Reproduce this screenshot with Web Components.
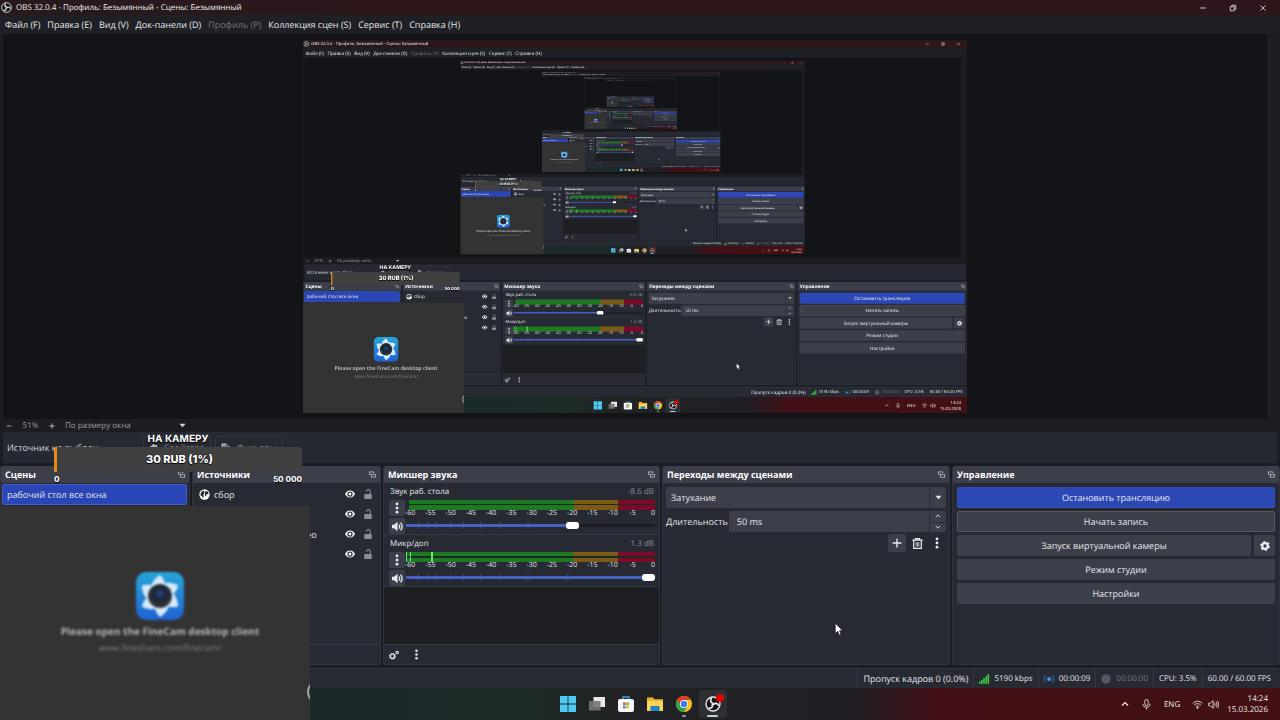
<!DOCTYPE html>
<html lang="ru">
<head>
<meta charset="utf-8">
<title>OBS 32.0.4 - Профиль: Безымянный - Сцены: Безымянный</title>
<style>
    body {
        margin: 0;
        overflow: hidden;
        background: #1d1f26;
    }
</style>
</head>
<body>
<obs-desktop depth="5"></obs-desktop>

<script>
// Icons are drawn in a 16x16 box and take the text colour
const ICONS = {
    obs: `<circle cx="8" cy="8" r="7" fill="#151518" stroke="currentColor" stroke-width="1.3"/>
        <g fill="none" stroke="currentColor" stroke-width="1.7" stroke-linecap="round">
            <path d="M8 7.2C5.6 6.6 5 4.6 6.2 2.8"/>
            <path d="M8 7.2C5.6 6.6 5 4.6 6.2 2.8" transform="rotate(120 8 8)"/>
            <path d="M8 7.2C5.6 6.6 5 4.6 6.2 2.8" transform="rotate(240 8 8)"/>
        </g>`,
    minimize: `<path d="M2 8h12" stroke="currentColor" stroke-width="1.6"/>`,
    restore: `<path d="M2.5 5.5h8v8h-8zM5.5 5V2.5h8v8H11" fill="none" stroke="currentColor" stroke-width="1.6"/>`,
    close: `<path d="M3 3l10 10M13 3L3 13" stroke="currentColor" stroke-width="1.6"/>`,
    minus: `<path d="M2 8h12" stroke="currentColor" stroke-width="2"/>`,
    plus: `<path d="M8 1v14M1 8h14" stroke="currentColor" stroke-width="2.2"/>`,
    down: `<path d="M1 4h14l-7 8z" fill="currentColor"/>`,
    chevronUp: `<path d="M2 11l6-6 6 6" fill="none" stroke="currentColor" stroke-width="2.4"/>`,
    chevronDown: `<path d="M2 5l6 6 6-6" fill="none" stroke="currentColor" stroke-width="2.4"/>`,
    float: `<path d="M11 4.500V2H1v6h3" fill="none" stroke="currentColor" stroke-width="1.8"/>
        <path d="M5.5 7.5h9.500v6.500h-9.500z" fill="none" stroke="currentColor" stroke-width="1.8"/>`,
    globe: `<circle cx="8" cy="8" r="7.5" fill="#fff"/>
        <path d="M3 5l3-3 2 1-1 2 1 1-2 2 1 2-1 3-2-3-2-1zM10 3l3 1 1 3-2 1-2-1 1 3-1 1-2-3 1-2-1-1z" fill="#20232b"/>`,
    eye: `<path d="M0 8c2-4 5-5.6 8-5.6S14 4 16 8c-2 4-5 5.6-8 5.6S2 12 0 8z" fill="#fff"/>
        <circle cx="8" cy="8" r="4.2" fill="#20232b"/><circle cx="8" cy="8" r="2.4" fill="#fff"/>`,
    lock: `<path d="M2 8h12v8H2z" fill="currentColor"/>
        <path d="M5.5 4.5V4c0-4 6-4 6 0v4" fill="none" stroke="currentColor" stroke-width="1.7"/>`,
    dots: `<circle cx="8" cy="2.5" r="1.9" fill="currentColor"/><circle cx="8" cy="8" r="1.9" fill="currentColor"/><circle cx="8" cy="13.5" r="1.9" fill="currentColor"/>`,
    speaker: `<path d="M0 5.5h3L8 1v14l-5-4.5H0z" fill="currentColor"/>
        <path d="M10 5c1.6 1.6 1.6 4.4 0 6M12.3 2.5c3.2 3 3.2 8 0 11" fill="none" stroke="currentColor" stroke-width="1.9"/>`,
    gear: `<circle cx="8" cy="8" r="4.5" fill="none" stroke="currentColor" stroke-width="3.6"/>
        <circle cx="8" cy="8" r="6.4" fill="none" stroke="currentColor" stroke-width="3" stroke-dasharray="3 3.7"/>`,
    gears: `<circle cx="5.5" cy="10" r="3.4" fill="none" stroke="currentColor" stroke-width="2.2"/>
        <circle cx="5.5" cy="10" r="5" fill="none" stroke="currentColor" stroke-width="1.4" stroke-dasharray="2 1.9"/>
        <circle cx="13" cy="4" r="2" fill="none" stroke="currentColor" stroke-width="1.8"/>`,
    filter: `<path d="M1 1h9v3H4v9H1z" fill="currentColor"/><path d="M5.5 5.5h9v9h-9z" fill="none" stroke="currentColor" stroke-width="1.6"/><path d="M8 8h4v4H8z" fill="currentColor"/>`,
    trash: `<path d="M0.5 3.2h15M5 3V1h6v2M2.5 4v11h11V4" fill="none" stroke="currentColor" stroke-width="1.8"/>
        <path d="M6 6v6.5M8 6v6.5M10 6v6.5" stroke="currentColor" stroke-width="1.1"/>`,
    bars: `<path d="M0 15.5V12h2.4v3.5zM3.4 15.5V9.5h2.4v6zM6.8 15.5V6.5h2.4v9zM10.2 15.5V3.5h2.4v12zM13.6 15.5V0H16v15.5z" fill="#3fd23f"/>`,
    live: `<circle cx="8" cy="8" r="3" fill="#4a9fee"/>
        <path d="M4 3c-2.6 3-2.6 7 0 10M12 3c2.6 3 2.6 7 0 10M1.5 2c-2.2 4-2.2 8 0 12M14.5 2c2.2 4 2.2 8 0 12" fill="none" stroke="#2a6095" stroke-width="1.4"/>`,
    record: `<circle cx="8" cy="8" r="7.5" fill="#555861"/>`,
    wifi: `<path d="M1 6.5c4-4.3 10-4.3 14 0M3.2 9c2.7-3 6.9-3 9.6 0M5.5 11.3c1.4-1.5 3.6-1.5 5 0" fill="none" stroke="currentColor" stroke-width="1.3"/>
        <circle cx="8" cy="13" r="1.3" fill="currentColor"/>`,
    volume: `<path d="M1 6h2.5L7.5 2.5v11L3.5 10H1z" fill="none" stroke="currentColor" stroke-width="1.2"/>
        <path d="M9.5 6c1 1.2 1 2.8 0 4M11.5 4c2 2.3 2 5.7 0 8M13.5 2.5c2.6 3.2 2.6 7.8 0 11" fill="none" stroke="currentColor" stroke-width="1.2"/>`,
    mic: `<rect x="5.5" y="0.7" width="5" height="9" rx="2.5" fill="none" stroke="currentColor" stroke-width="1.2"/>
        <path d="M3 7v1c0 5.5 10 5.5 10 0V7M8 12v3.5" fill="none" stroke="currentColor" stroke-width="1.2"/>`,
    windows: `<path d="M0 0h7.6v7.6H0zM8.4 0H16v7.6H8.4zM0 8.4h7.6V16H0zM8.4 8.4H16V16H8.4z" fill="#4fcaf5"/>`,
    tasks: `<path d="M4.5 1H16v10H4.5z" fill="#e8e8ea"/><path d="M0 5h11.5v9.5H0z" fill="#77777b" fill-opacity=".9"/>`,
    store: `<path d="M5 4V1h6v3" fill="none" stroke="#3ba7e0" stroke-width="1.3"/><rect y="3" width="16" height="13" rx="2" fill="#f3f5f8"/>
        <path d="M5 6.5h2.7v2.7H5z" fill="#e8502e"/><path d="M8.3 6.5H11v2.7H8.3z" fill="#7eb72d"/><path d="M5 9.8h2.7v2.7H5z" fill="#2a9fe0"/><path d="M8.3 9.8H11v2.7H8.3z" fill="#f7b91e"/>`,
    folder: `<path d="M0 1.5h6l1.5 1.8H16V15H0z" fill="#f0b429"/><path d="M0 5h16v10H0z" fill="#fbd45c"/><path d="M3.5 10h9v5h-9z" fill="#2782c4"/>`,
    chrome: `<circle cx="8" cy="8" r="8" fill="#fbc116"/><path d="M1.07 4A8 8 0 0 1 14.93 4H8L4.5 10z" fill="#e33b2e"/>
        <path d="M1.07 4A8 8 0 0 0 8 16l3.5-6L8 8l-3.5 2z" fill="#2ba24c"/><circle cx="8" cy="8" r="4.1" fill="#fff"/><circle cx="8" cy="8" r="3.2" fill="#3b7ded"/>`,
    cursor: `<path d="M4 0v13l3-2.8L9 15l2.2-1-2-4.5H13z" fill="#fff" stroke="#111" stroke-width=".8"/>`,
};

class ObsIcon extends HTMLElement {
    constructor() {
        super();
        this.attachShadow({ mode: "open" });
    }

    connectedCallback() {
        const size = this.getAttribute("size") || 10;
        this.shadowRoot.innerHTML = `
            <style>
                :host { display: inline-block; flex: none; line-height: 0; }
                svg { display: block; overflow: visible; }
            </style>
            <svg width="${size}" height="${size}" viewBox="0 0 16 16" aria-hidden="true">${ICONS[this.getAttribute("name")]}</svg>
        `;
    }
}

class ObsButton extends HTMLElement {
    constructor() {
        super();
        this.attachShadow({ mode: "open" });
    }

    connectedCallback() {
        const label = this.getAttribute("label");
        this.shadowRoot.innerHTML = `
            <style>
                :host { display: block; }
                button {
                    display: flex;
                    align-items: center;
                    justify-content: center;
                    box-sizing: border-box;
                    width: 100%;
                    height: 100%;
                    padding: 3px 4px;
                    border: 1px solid #3c404b;
                    border-radius: 2px;
                    background: #3c3f4a;
                    color: #e9eaed;
                    font: inherit;
                    line-height: 13px;
                    text-rendering: inherit;
                }
                :host([primary]) button { background: #2b48b5; border-color: #3450b8; }
                :host([outlined]) button { border-color: #555965; }
                :host([bare]) button { background: none; border-color: transparent; padding: 0; }
                :host([tight]) button { padding: 0; }
            </style>
            <button type="button" ${label ? `aria-label="${label}"` : ""}><slot></slot></button>
        `;
    }
}

class ObsMenuBar extends HTMLElement {
    constructor() {
        super();
        this.attachShadow({ mode: "open" });
        this.shadowRoot.innerHTML = `
            <style>
                :host { display: block; }
                .title {
                    display: flex;
                    align-items: center;
                    gap: 4px;
                    height: 15px;
                    padding: 0 13px 0 1px;
                    background: linear-gradient(90deg, #27191c, #2d171b 30%, #2d171b);
                    color: #eee;
                    font-size: 8px;
                }
                .title span { flex: 1; }
                .window { display: flex; gap: 22px; }
                nav {
                    display: flex;
                    gap: 7px;
                    padding: 3px 5px 3px;
                    background: #1e2025;
                    font-size: 9px;
                    line-height: 13px;
                }
                a { color: #e8e8ea; text-decoration: none; }
                a.off { color: #73757b; }
            </style>
            <div class="title">
                <obs-icon name="obs" size="11"></obs-icon>
                <span>OBS 32.0.4 - Профиль: Безымянный - Сцены: Безымянный</span>
                <div class="window">
                    <obs-icon name="minimize" size="8"></obs-icon>
                    <obs-icon name="restore" size="8"></obs-icon>
                    <obs-icon name="close" size="8"></obs-icon>
                </div>
            </div>
            <nav>
                <a href="#">Файл (F)</a><a href="#">Правка (E)</a><a href="#">Вид (V)</a>
                <a href="#">Док-панели (D)</a><a href="#" class="off">Профиль (P)</a>
                <a href="#">Коллекция сцен (S)</a><a href="#">Сервис (T)</a><a href="#">Справка (H)</a>
            </nav>
        `;
    }
}

class ObsPreview extends HTMLElement {
    constructor() {
        super();
        this.attachShadow({ mode: "open" });
        this.shadowRoot.innerHTML = `
            <style>
                :host { display: flex; flex-direction: column; min-height: 0; background: #1b1d21; }
                .area {
                    flex: 1;
                    display: flex;
                    align-items: center;
                    justify-content: center;
                    min-height: 0;
                    margin: 0 13px 0 3px;
                    background: #131418;
                }
                /* the captured screen, shown at the zoom of the preview */
                .capture {
                    --scale: 0.519;
                    width: calc(100vw * var(--scale));
                    height: calc(100vh * var(--scale));
                    overflow: hidden;
                }
                ::slotted(*) {
                    transform: scale(0.519);
                    transform-origin: 0 0;
                }
                .zoom {
                    display: flex;
                    align-items: center;
                    padding: 0 6px;
                    color: #9b9da3;
                    font-size: 8px;
                    line-height: 13px;
                }
                .zoom obs-icon { color: #d0d1d5; }
                .zoom output { width: 37px; text-align: center; }
                .zoom span { width: 114px; margin-left: 10px; }
            </style>
            <div class="area"><div class="capture"><slot></slot></div></div>
            <div class="zoom">
                <obs-icon name="minus" size="6"></obs-icon>
                <output>51%</output>
                <obs-icon name="plus" size="6"></obs-icon>
                <span>По размеру окна</span>
                <obs-icon name="down" size="7"></obs-icon>
            </div>
        `;
    }
}

class ObsContextBar extends HTMLElement {
    constructor() {
        super();
        this.attachShadow({ mode: "open" });
        this.shadowRoot.innerHTML = `
            <style>
                :host {
                    display: flex;
                    align-items: center;
                    gap: 4px;
                    margin: 0 3px;
                    padding: 4px;
                    background: #262932;
                    border-radius: 2px;
                    color: #d7d8dc;
                }
                span { width: 132px; }
                button {
                    display: flex;
                    align-items: center;
                    justify-content: center;
                    gap: 6px;
                    width: 68px;
                    height: 23px;
                    padding: 0;
                    border: 1px solid #323641;
                    border-radius: 2px;
                    background: none;
                    color: #85878e;
                    font: inherit;
                    text-rendering: inherit;
                }
                obs-icon { color: #b8babf; }
            </style>
            <span>Источник не выбран</span>
            <button type="button" disabled><obs-icon name="gear" size="8"></obs-icon>Свойства</button>
            <button type="button" disabled><obs-icon name="filter" size="9"></obs-icon>Фильтры</button>
        `;
    }
}

class ObsDock extends HTMLElement {
    constructor() {
        super();
        this.attachShadow({ mode: "open" });
    }

    connectedCallback() {
        this.shadowRoot.innerHTML = `
            <style>
                :host {
                    display: flex;
                    flex-direction: column;
                    min-width: 0;
                    border: 1px solid #30333d;
                    border-top: 0;
                    border-radius: 3px;
                    background: #272a33;
                    overflow: hidden;
                }
                header {
                    display: flex;
                    align-items: center;
                    justify-content: space-between;
                    padding: 2px 4px;
                    background: #3c3e4a;
                }
                h2 {
                    margin: 0;
                    color: #fff;
                    font-size: 9px;
                    font-weight: 700;
                    line-height: 13px;
                }
                obs-icon { color: #c6c8ce; }
            </style>
            <header><h2>${this.getAttribute("heading")}</h2><obs-icon name="float" size="7"></obs-icon></header>
            <slot></slot>
        `;
    }
}

class ObsSource extends HTMLElement {
    constructor() {
        super();
        this.attachShadow({ mode: "open" });
    }

    connectedCallback() {
        const icon = this.getAttribute("icon");
        this.shadowRoot.innerHTML = `
            <style>
                :host {
                    display: grid;
                    grid-template-columns: 11px 1fr 14px 14px;
                    align-items: center;
                    gap: 4px;
                    height: 20px;
                    padding: 0 5px 0 6px;
                }
                span { white-space: nowrap; }
                .lock { color: #8d8f95; }
            </style>
            ${icon ? `<obs-icon name="${icon}" size="11"></obs-icon>` : "<i></i>"}
            <span><slot></slot></span>
            <obs-button bare label="Видимость"><obs-icon name="eye" size="10"></obs-icon></obs-button>
            <obs-button bare label="Блокировка"><obs-icon class="lock" name="lock" size="10"></obs-icon></obs-button>
        `;
    }
}

class ObsChannel extends HTMLElement {
    constructor() {
        super();
        this.attachShadow({ mode: "open" });
    }

    connectedCallback() {
        const name = this.getAttribute("name");
        const value = this.getAttribute("value");
        const marks = [];
        for (let db = -60; db <= 0; db += 5) marks.push(`<span>${db}</span>`);
        // volume ticks follow a logarithmic scale
        const ticks = [5, 9, 12, 18, 23, 30, 38, 49, 65]
            .map((x) => `<path d="M${x * 10} 0v10"/>`).join("");

        this.shadowRoot.innerHTML = `
            <style>
                :host {
                    display: grid;
                    grid-template-columns: 16px 1fr;
                    column-gap: 1px;
                    padding: 2px 4px 0 5px;
                    border-bottom: 1px solid #343843;
                }
                .head {
                    grid-column: 1 / 3;
                    display: flex;
                    justify-content: space-between;
                    padding: 0 1px 2px;
                    font-size: 8px;
                    line-height: 13px;
                }
                output { color: #8b8d94; }
                .side { display: grid; grid-template-rows: 16px 16px; gap: 2px; }
                .meter {
                    height: 10px;
                    margin-left: 3px;
                    background:
                        linear-gradient(transparent 45%, #1b2b22 45%, #1b2b22 55%, transparent 55%),
                        linear-gradient(90deg, #1e7a22 67%, #7a5a15 67%, #7a5a15 85%, #7c0a28 85%);
                }
                :host([live]) .meter {
                    margin-left: 0;
                    background:
                        linear-gradient(#62e86a, #62e86a) 0 0 / 1px 10px no-repeat,
                        linear-gradient(#62e86a, #62e86a) 4px 0 / 1px 10px no-repeat,
                        linear-gradient(#62e86a, #62e86a) 25px 0 / 2px 10px no-repeat,
                        linear-gradient(transparent 45%, #1b2b22 45%, #1b2b22 55%, transparent 55%),
                        linear-gradient(90deg, #1e7a22 67%, #7a5a15 67%, #7a5a15 85%, #7c0a28 85%);
                }
                .scale {
                    display: flex;
                    justify-content: space-between;
                    margin-right: -2px;
                    color: #e0e1e4;
                    font-size: 7px;
                    line-height: 8px;
                }
                .scale span { display: flex; justify-content: center; width: 8px; }
                .fader { display: grid; align-items: center; height: 14px; }
                .fader > * { grid-area: 1 / 1; }
                svg { width: 100%; height: 8px; stroke: #4c5060; stroke-width: 3; }
                input {
                    appearance: none;
                    width: 100%;
                    height: 3px;
                    margin: 0;
                    background: linear-gradient(90deg, #4460c4 ${value}%, #1b1d23 ${value}%);
                }
                input::-webkit-slider-thumb {
                    appearance: none;
                    width: 13px;
                    height: 7px;
                    border-radius: 3px;
                    background: #fff;
                }
            </style>
            <div class="head"><label for="volume">${name}</label><output>${this.getAttribute("db")} dB</output></div>
            <div class="side">
                <obs-button tight label="Меню: ${name}"><obs-icon name="dots" size="12"></obs-icon></obs-button>
                <obs-button tight label="Заглушить: ${name}"><obs-icon name="speaker" size="11"></obs-icon></obs-button>
            </div>
            <div>
                <div class="meter"></div>
                <div class="scale">${marks.join("")}</div>
                <div class="fader">
                    <svg viewBox="0 0 1000 10" preserveAspectRatio="none">${ticks}</svg>
                    <input id="volume" type="range" min="0" max="100" value="${value}">
                </div>
            </div>
        `;
    }
}

class ObsTransitions extends HTMLElement {
    constructor() {
        super();
        this.attachShadow({ mode: "open" });
        this.shadowRoot.innerHTML = `
            <style>
                :host { display: flex; flex-direction: column; gap: 3px; padding: 4px 3px; }
                .field {
                    flex: 1;
                    display: grid;
                    grid-template-columns: 1fr 16px;
                    height: 21px;
                    border-radius: 2px;
                    background: #3c3f4a;
                }
                .pick { flex: none; }
                select, input {
                    appearance: none;
                    min-width: 0;
                    margin: 0;
                    padding: 0 5px;
                    border: 0;
                    border-right: 1px solid #2b2e38;
                    background: none;
                    color: #e9eaed;
                    font: inherit;
                    text-rendering: inherit;
                }
                input { padding-left: 8px; }
                .pick obs-icon { place-self: center; }
                .row { display: flex; align-items: center; gap: 1px; }
                .steps { display: grid; grid-template-rows: 1fr 1fr; color: #c9cbd0; }
                .steps obs-button + obs-button { border-top: 1px solid #2b2e38; }
                .tools { display: flex; justify-content: flex-end; gap: 2px; margin-top: -1px; }
                .tools obs-button { width: 18px; height: 18px; }
            </style>
            <div class="field pick">
                <select aria-label="Переход"><option>Затухание</option></select>
                <obs-icon name="down" size="7"></obs-icon>
            </div>
            <div class="row">
                <label for="duration">Длительность</label>
                <div class="field">
                    <input id="duration" type="text" value="50 ms">
                    <div class="steps">
                        <obs-button bare label="Больше"><obs-icon name="chevronUp" size="6"></obs-icon></obs-button>
                        <obs-button bare label="Меньше"><obs-icon name="chevronDown" size="6"></obs-icon></obs-button>
                    </div>
                </div>
            </div>
            <div class="tools">
                <obs-button tight label="Добавить"><obs-icon name="plus" size="10"></obs-icon></obs-button>
                <obs-button bare label="Удалить"><obs-icon name="trash" size="11"></obs-icon></obs-button>
                <obs-button bare label="Ещё"><obs-icon name="dots" size="12"></obs-icon></obs-button>
            </div>
        `;
    }
}

class ObsStatusBar extends HTMLElement {
    constructor() {
        super();
        this.attachShadow({ mode: "open" });
        this.shadowRoot.innerHTML = `
            <style>
                :host {
                    display: flex;
                    justify-content: flex-end;
                    margin-top: 3px;
                    padding-right: 4px;
                    border-top: 1px solid #333640;
                    background: #272a33;
                    font-size: 8px;
                    line-height: 19px;
                }
                span {
                    display: flex;
                    align-items: center;
                    gap: 5px;
                    padding: 0 5px;
                    border-left: 1px solid #343741;
                }
                .frames { font-size: 9px; }
                .off { color: #777981; }
            </style>
            <span class="frames">Пропуск кадров 0 (0.0%)</span>
            <span><obs-icon name="bars" size="10"></obs-icon>5190 kbps</span>
            <span><obs-icon name="live" size="10"></obs-icon>00:00:09</span>
            <span class="off"><obs-icon name="record" size="10"></obs-icon>00:00:00</span>
            <span>CPU: 3.5%</span>
            <span>60.00 / 60.00 FPS</span>
        `;
    }
}

class WinTaskbar extends HTMLElement {
    constructor() {
        super();
        this.attachShadow({ mode: "open" });
        this.shadowRoot.innerHTML = `
            <style>
                :host {
                    display: grid;
                    grid-template-columns: 1fr auto 1fr;
                    align-items: center;
                    height: 32px;
                    background: linear-gradient(90deg, #1a2a28 24%, #1d2b29 40%, #202224 48%, #211f26 66%, #2b1920 69%, #420f16 73%, #431014);
                    color: #eee;
                    font-size: 8px;
                }
                .apps { grid-column: 2; display: flex; gap: 1px; }
                .app {
                    display: flex;
                    flex-direction: column;
                    align-items: center;
                    gap: 3px;
                    width: 28px;
                    height: 22px;
                    padding-top: 6px;
                    border-radius: 3px;
                }
                .app::after { content: ""; height: 2px; border-radius: 1px; }
                .app.open::after { width: 4px; background: #999; }
                .app.active { background: #2e2f33; }
                .app.active::after { width: 11px; background: #b5d0d8; }
                .badge { display: grid; }
                .badge > * { grid-area: 1 / 1; }
                .badge i {
                    place-self: start end;
                    width: 8px;
                    height: 8px;
                    margin: -2px -3px 0 0;
                    border-radius: 50%;
                    background: #e60008;
                    z-index: 1;
                }
                .tray {
                    display: flex;
                    align-items: center;
                    justify-content: flex-end;
                    padding-right: 12px;
                }
                .icons { display: flex; align-items: center; gap: 12px; margin-right: 8px; }
                .net { display: flex; gap: 5px; }
                time { text-align: right; line-height: 11px; }
            </style>
            <div class="apps">
                <div class="app"><obs-icon name="windows" size="16"></obs-icon></div>
                <div class="app"><obs-icon name="tasks" size="16"></obs-icon></div>
                <div class="app"><obs-icon name="store" size="16"></obs-icon></div>
                <div class="app"><obs-icon name="folder" size="16"></obs-icon></div>
                <div class="app open"><obs-icon name="chrome" size="16"></obs-icon></div>
                <div class="app active"><div class="badge"><obs-icon name="obs" size="16"></obs-icon><i></i></div></div>
            </div>
            <div class="tray">
                <div class="icons">
                    <obs-icon name="chevronUp" size="8"></obs-icon>
                    <obs-icon name="mic" size="11"></obs-icon>
                    <span>ENG</span>
                    <div class="net"><obs-icon name="wifi" size="11"></obs-icon><obs-icon name="volume" size="11"></obs-icon></div>
                </div>
                <time>14:24<br>15.03.2026</time>
            </div>
        `;
    }
}

class GoalWidget extends HTMLElement {
    constructor() {
        super();
        this.attachShadow({ mode: "open" });
        this.shadowRoot.innerHTML = `
            <style>
                :host {
                    display: block;
                    color: #fff;
                    font-family: Inter, "Open Sans", sans-serif;
                    font-weight: 800;
                    text-align: center;
                    text-shadow: 0 0 1px #000, 0 1px 1px #000;
                }
                h3 { margin: 0; font-size: 10px; line-height: 15px; }
                .bar {
                    border-left: 3px solid #e58a1c;
                    border-radius: 1px 3px 3px 1px;
                    background: #404040;
                    font-size: 11px;
                    line-height: 25px;
                }
                .range { display: flex; justify-content: space-between; font-size: 8px; line-height: 14px; }
            </style>
            <h3>НА КАМЕРУ</h3>
            <div class="bar">30 RUB (1%)</div>
            <div class="range"><span>0</span><span>50 000</span></div>
        `;
    }
}

class CameraFeed extends HTMLElement {
    constructor() {
        super();
        this.attachShadow({ mode: "open" });
        this.shadowRoot.innerHTML = `
            <style>
                :host {
                    display: flex;
                    flex-direction: column;
                    align-items: center;
                    box-sizing: border-box;
                    padding: 66px 0 0 10px;
                    background: #333;
                    overflow: hidden;
                }
                svg { filter: blur(1px); }
                p { margin: 0; filter: blur(1px); white-space: nowrap; }
                .main { margin-top: 4px; color: #b4b4b4; font-size: 10px; font-weight: 700; line-height: 15px; }
                .link { color: #7d7d7d; font-size: 9px; line-height: 18px; }
                .knob {
                    position: absolute;
                    right: -21px;
                    bottom: 16px;
                    width: 20px;
                    height: 20px;
                    border: 2px solid #a5a5a5;
                    border-radius: 50%;
                }
            </style>
            <svg width="48" height="48" viewBox="0 0 48 48">
                <defs>
                    <linearGradient id="face" x1="0" y1="0" x2="0" y2="1"><stop offset="0" stop-color="#27a5d8"/><stop offset="1" stop-color="#1f62d3"/></linearGradient>
                    <radialGradient id="lens" cx=".5" cy=".4"><stop offset="0" stop-color="#2a4a86"/><stop offset=".5" stop-color="#1c2536"/><stop offset="1" stop-color="#30343b"/></radialGradient>
                    <path id="petal" d="M15 15c1-5 4-9 9-12 3 3 5 6 5 11z"/>
                </defs>
                <rect width="48" height="48" rx="10" fill="url(#face)"/>
                <circle cx="24" cy="24" r="14" fill="#bcdcf6"/>
                <g fill="#d6eafa">
                    <use href="#petal"/><use href="#petal" transform="rotate(60 24 24)"/><use href="#petal" transform="rotate(120 24 24)"/>
                    <use href="#petal" transform="rotate(180 24 24)"/><use href="#petal" transform="rotate(240 24 24)"/><use href="#petal" transform="rotate(300 24 24)"/>
                </g>
                <circle cx="24" cy="24" r="12" fill="url(#lens)"/>
            </svg>
            <p class="main">Please open the FineCam desktop client</p>
            <p class="link">www.fineshare.com/finecam/</p>
            <div class="knob"></div>
        `;
    }
}

class ObsDesktop extends HTMLElement {
    constructor() {
        super();
        this.attachShadow({ mode: "open" });
    }

    connectedCallback() {
        const depth = Number(this.getAttribute("depth"));
        // The preview captures the desktop that it stands on
        const capture = depth > 0 ? `<obs-desktop depth="${depth - 1}"></obs-desktop>` : "";

        this.shadowRoot.innerHTML = `
            <style>
                :host {
                    position: relative;
                    display: flex;
                    flex-direction: column;
                    width: 100vw;
                    height: 100vh;
                    overflow: hidden;
                    background: #1b1d25;
                    color: #e4e5e8;
                    font-family: "Open Sans", "Noto Sans", sans-serif;
                    font-size: 9px;
                    line-height: 13px;
                    text-rendering: geometricPrecision;
                }
                obs-preview { flex: 1; }
                .docks {
                    display: grid;
                    grid-template-columns: 190fr 189fr 277fr 288fr 328fr;
                    gap: 2px;
                    margin-top: 3px;
                }
                .scene {
                    margin: 1px 2px 0 1px;
                    padding: 3px 4px;
                    border: 1px solid #4460c4;
                    border-radius: 2px;
                    background: #2a45b5;
                }
                .sources { padding-top: 1px; }
                .foot {
                    display: flex;
                    align-items: center;
                    gap: 12px;
                    height: 19px;
                    margin-top: auto;
                    padding: 0 5px;
                    border-top: 1px solid #343843;
                }
                .empty { flex: 1; min-height: 57px; background: #1e1f22; }
                .controls { display: flex; flex-direction: column; gap: 3px; padding: 4px; }
                .controls obs-button { height: 21px; }
                .camera { display: grid; grid-template-columns: 1fr 21px; gap: 3px; }
                goal-widget { position: absolute; left: 54px; bottom: 234px; width: 248px; }
                camera-feed { position: absolute; left: 0; bottom: 0; width: 310px; height: 214px; }
                .cursor { position: absolute; left: 65%; bottom: 84px; }
            </style>
            <obs-menu-bar></obs-menu-bar>
            <obs-preview>${capture}</obs-preview>
            <obs-context-bar></obs-context-bar>
            <div class="docks">
                <obs-dock heading="Сцены">
                    <div class="scene">рабочий стол все окна</div>
                </obs-dock>
                <obs-dock heading="Источники">
                    <div class="sources">
                        <obs-source icon="globe">сбор</obs-source>
                        <obs-source></obs-source>
                        <obs-source>Устройство захв. видео</obs-source>
                        <obs-source></obs-source>
                    </div>
                    <div class="foot"></div>
                </obs-dock>
                <obs-dock heading="Микшер звука">
                    <obs-channel name="Звук раб. стола" db="-8.6" value="68"></obs-channel>
                    <obs-channel name="Микр/доп" db="1.3" value="100" live></obs-channel>
                    <div class="empty"></div>
                    <div class="foot">
                        <obs-icon name="gears" size="10"></obs-icon>
                        <obs-icon name="dots" size="11"></obs-icon>
                    </div>
                </obs-dock>
                <obs-dock heading="Переходы между сценами">
                    <obs-transitions></obs-transitions>
                </obs-dock>
                <obs-dock heading="Управление">
                    <div class="controls">
                        <obs-button primary>Остановить трансляцию</obs-button>
                        <obs-button outlined>Начать запись</obs-button>
                        <div class="camera">
                            <obs-button>Запуск виртуальной камеры</obs-button>
                            <obs-button tight label="Настройки камеры"><obs-icon name="gear" size="10"></obs-icon></obs-button>
                        </div>
                        <obs-button>Режим студии</obs-button>
                        <obs-button>Настройки</obs-button>
                    </div>
                </obs-dock>
            </div>
            <obs-status-bar></obs-status-bar>
            <win-taskbar></win-taskbar>
            <goal-widget></goal-widget>
            <camera-feed></camera-feed>
            <obs-icon class="cursor" name="cursor" size="13"></obs-icon>
        `;
    }
}

customElements.define("obs-icon", ObsIcon);
customElements.define("obs-button", ObsButton);
customElements.define("obs-menu-bar", ObsMenuBar);
customElements.define("obs-preview", ObsPreview);
customElements.define("obs-context-bar", ObsContextBar);
customElements.define("obs-dock", ObsDock);
customElements.define("obs-source", ObsSource);
customElements.define("obs-channel", ObsChannel);
customElements.define("obs-transitions", ObsTransitions);
customElements.define("obs-status-bar", ObsStatusBar);
customElements.define("win-taskbar", WinTaskbar);
customElements.define("goal-widget", GoalWidget);
customElements.define("camera-feed", CameraFeed);
customElements.define("obs-desktop", ObsDesktop);
</script>
</body>
</html>
